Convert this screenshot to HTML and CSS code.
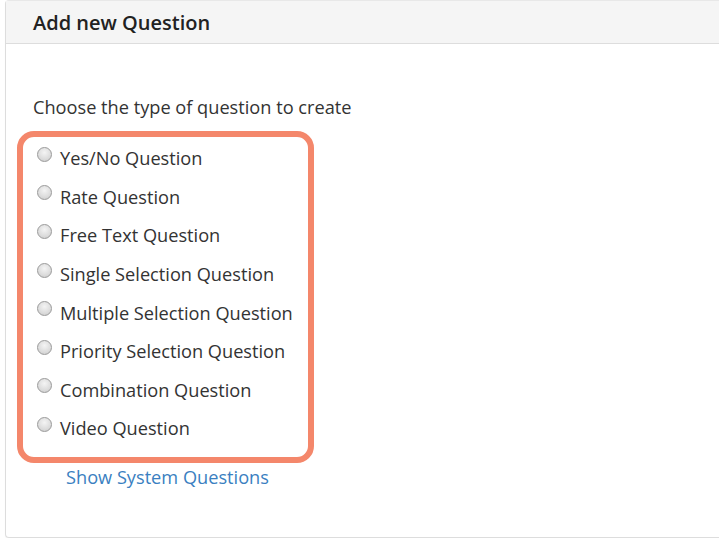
FILE: index.html
```html
<!DOCTYPE html>
<html>
<head>
<meta charset="utf-8">
<link rel="stylesheet" href="styles.css">
</head>
<body>
<div class="panel">
  <div class="panel-heading">Add new Question</div>
  <div class="panel-body">
    <p class="prompt">Choose the type of question to create</p>
    <div class="choices">
      <label class="choice"><span class="radio"></span>Yes/No Question</label>
      <label class="choice"><span class="radio"></span>Rate Question</label>
      <label class="choice"><span class="radio"></span>Free Text Question</label>
      <label class="choice"><span class="radio"></span>Single Selection Question</label>
      <label class="choice"><span class="radio"></span>Multiple Selection Question</label>
      <label class="choice"><span class="radio"></span>Priority Selection Question</label>
      <label class="choice"><span class="radio"></span>Combination Question</label>
      <label class="choice"><span class="radio"></span>Video Question</label>
    </div>
    <a class="system-link" href="#">Show System Questions</a>
  </div>
</div>
</body>
</html>
```

FILE: styles.css
```css
html, body {
  margin: 0;
  padding: 0;
  background: #ffffff;
  overflow: hidden;
}
body {
  font-family: "Open Sans", "Noto Sans", sans-serif;
  color: #333333;
  font-size: 18.2px;
}
.panel {
  margin-left: 5px;
  width: 740px;
  height: 538px;
  border: 1px solid #dddddd;
  border-top-color: #e8e8e8;
  border-radius: 4px;
  box-sizing: border-box;
  box-shadow: 0 1px 1px rgba(0,0,0,0.05);
}
.panel-heading {
  height: 43px;
  box-sizing: border-box;
  background: #f5f5f5;
  border-bottom: 1px solid #dddddd;
  padding-left: 27px;
  display: flex;
  align-items: center;
  font-size: 20px;
  font-weight: 600;
  color: #222222;
}
.panel-body {
  padding: 0 0 0 11px;
}
.prompt {
  margin: 0;
  padding: 50px 0 0 16px;
  line-height: 26px;
}
.choices {
  margin-top: 11px;
  width: 297px;
  height: 332px;
  box-sizing: border-box;
  border: 6px solid #f4876b;
  border-radius: 17px;
  padding: 2px 0 0 14px;
  display: flex;
  flex-direction: column;
}
.choice {
  height: 38.6px;
  display: flex;
  align-items: center;
  gap: 8px;
}
.radio {
  width: 13px;
  height: 13px;
  border-radius: 50%;
  border: 1px solid #9a9a9a;
  background: radial-gradient(circle at 50% 35%, #f4f4f4 0%, #dcdcdc 60%, #c8c8c8 100%);
  margin-top: -8px;
  flex: none;
}
.system-link {
  display: inline-block;
  margin: 2px 0 0 49px;
  color: #3a7fc1;
  text-decoration: none;
}
```
